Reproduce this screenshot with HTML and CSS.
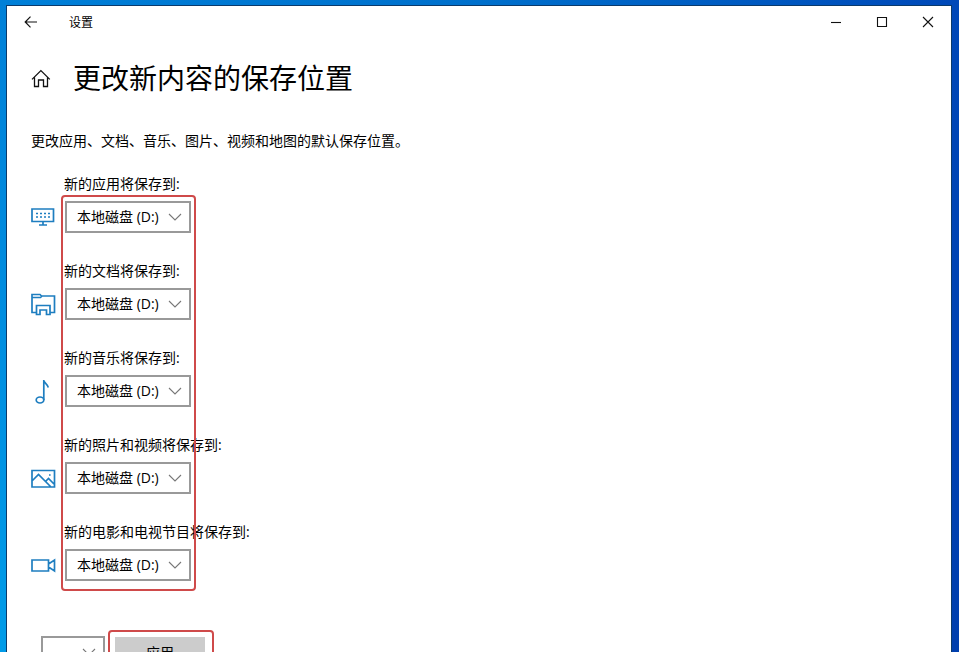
FILE: index.html
```
<!DOCTYPE html>
<html lang="zh-CN">
  <head>
    <meta charset="UTF-8" />
    <meta name="viewport" content="width=device-width, initial-scale=1.0" />
    <title>设置</title>
    <link rel="stylesheet" href="styles.css">
  </head>
  <body>
    <div class="window">
      <header class="titlebar">
        <svg class="back" width="14" height="12" viewBox="0 0 14 12"><path d="M6.5 .7L1.2 6l5.3 5.3M1.2 6H13" /></svg>
        <span class="app-name">设置</span>
        <div class="controls">
          <svg width="12" height="12" viewBox="0 0 12 12"><path d="M1 6.5h10" /></svg>
          <svg width="12" height="12" viewBox="0 0 12 12"><path d="M1.5 1.5h9v9h-9z" /></svg>
          <svg width="12" height="12" viewBox="0 0 12 12"><path d="M1 1l10 10M11 1L1 11" /></svg>
        </div>
      </header>

      <main>
        <div class="heading">
          <svg class="home" width="20" height="20" viewBox="0 0 20 20"><path d="M1 10.4L9.9 1.6l8.9 8.8M3.500 8.500v9h4v-6.500h5v6.500h4v-9" /></svg>
          <h1>更改新内容的保存位置</h1>
        </div>
        <p class="intro">更改应用、文档、音乐、图片、视频和地图的默认保存位置。</p>

        <div class="locations">
          <div class="row">
            <svg class="icon" width="26" height="26" viewBox="0 0 26 26">
              <path d="M1 5h21.500v12.500H1zM12 17.500v3.500M8 21h8" />
              <path class="keys" d="M5 9.500h14M5 13h14" />
            </svg>
            <div class="field">
              <label>新的应用将保存到:</label>
              <div class="select"><span>本地磁盘 (D:)</span><svg class="arrow" width="14" height="8" viewBox="0 0 14 8"><path d="M1 1l6 6 6-6" /></svg></div>
            </div>
          </div>
          <div class="row">
            <svg class="icon" width="26" height="26" viewBox="0 0 26 26">
              <path d="M5.500 21.500H1V3.500h8l1.500 1.500H23.500v16.500H19M1 6.500h8.500l1.500-1.500" />
              <path d="M5.500 23.500V14.500h13.500v9h-3.500v-4.500H9v4.500z" />
            </svg>
            <div class="field">
              <label>新的文档将保存到:</label>
              <div class="select"><span>本地磁盘 (D:)</span><svg class="arrow" width="14" height="8" viewBox="0 0 14 8"><path d="M1 1l6 6 6-6" /></svg></div>
            </div>
          </div>
          <div class="row">
            <svg class="icon" width="26" height="26" viewBox="0 0 26 26">
              <ellipse cx="9" cy="22" rx="3.800" ry="3" />
              <path d="M12.800 22V2c.5 3.500 3.500 3.500 4.500 7.500" />
            </svg>
            <div class="field">
              <label>新的音乐将保存到:</label>
              <div class="select"><span>本地磁盘 (D:)</span><svg class="arrow" width="14" height="8" viewBox="0 0 14 8"><path d="M1 1l6 6 6-6" /></svg></div>
            </div>
          </div>
          <div class="row">
            <svg class="icon" width="26" height="26" viewBox="0 0 26 26">
              <path d="M1 5.500h22.500v16.500H1zM1 16l6.500-6.500L20 22M14.500 16.500l3-3 6 6" />
              <path d="M18 10h1.600" />
            </svg>
            <div class="field">
              <label>新的照片和视频将保存到:</label>
              <div class="select"><span>本地磁盘 (D:)</span><svg class="arrow" width="14" height="8" viewBox="0 0 14 8"><path d="M1 1l6 6 6-6" /></svg></div>
            </div>
          </div>
          <div class="row">
            <svg class="icon" width="26" height="26" viewBox="0 0 26 26">
              <path d="M1 8h16.500v11H1zM17.500 12l6-4v11l-6-4" />
            </svg>
            <div class="field">
              <label>新的电影和电视节目将保存到:</label>
              <div class="select"><span>本地磁盘 (D:)</span><svg class="arrow" width="14" height="8" viewBox="0 0 14 8"><path d="M1 1l6 6 6-6" /></svg></div>
            </div>
          </div>
          <div class="mark"></div>
        </div>

        <div class="actions">
          <div class="select small"><svg class="arrow" width="14" height="8" viewBox="0 0 14 8"><path d="M1 1l6 6 6-6" /></svg></div>
          <div class="apply-mark"><button class="apply">应用</button></div>
        </div>
      </main>
    </div>
  </body>
</html>
```
FILE: styles.css
```
* {
  margin: 0;
  box-sizing: border-box;
}

body {
  height: 652px;
  padding: 5px 7px 0 6px;
  overflow: hidden;
  font-family: "Open Sans", "Noto Sans CJK SC", sans-serif;
  font-size: 14px;
  color: #000;
  background:
    linear-gradient(#0080d8, #009be8) 0 0 / 7px 100% no-repeat,
    linear-gradient(#0048b8, #003fae) 100% 0 / 8px 100% no-repeat,
    linear-gradient(90deg, #0080d8, #0070cc 50%, #0048b8);
}

svg {
  display: block;
  flex: none;
  fill: none;
  stroke: #111;
  stroke-width: 1.1;
}

.window {
  height: 647px;
  overflow: hidden;
  border: 1px solid #0b3a6b;
  border-bottom: 0;
  background: #fff;
}

.titlebar {
  display: flex;
  align-items: center;
  height: 32px;
  padding: 0 17px;
}

.back {
  stroke-width: 1.2;
}

.app-name {
  margin-left: 31px;
  font-size: 12px;
}

.controls {
  display: flex;
  gap: 34px;
  margin-left: auto;
}

main {
  padding: 0 24px;
}

.heading {
  display: flex;
  align-items: center;
  height: 80px;
}

.home {
  margin-top: 1px;
  stroke-width: 1.3;
}

h1 {
  margin-left: 22px;
  font-size: 28px;
  line-height: 40px;
  font-weight: 400;
}

.intro {
  margin-top: 12px;
  line-height: 22px;
}

.locations {
  position: relative;
  margin-top: 22px;
}

.row {
  display: flex;
  height: 87px;
}

.icon {
  margin: 30px 7px 0 0;
  stroke: #1e7ec0;
  stroke-width: 1.7;
}

.keys {
  stroke-dasharray: 2 2;
}

label {
  display: block;
  line-height: 20px;
  white-space: nowrap;
}

.select {
  display: flex;
  align-items: center;
  justify-content: space-between;
  width: 126px;
  height: 32px;
  margin: 7px 0 0 1px;
  padding: 0 7px 0 10px;
  border: 2px solid #999;
  white-space: nowrap;
}

.select span {
  padding-bottom: 2px;
}

.arrow {
  stroke: #777;
}

/* red highlight around all the dropdowns */
.mark {
  position: absolute;
  top: 21px;
  left: 30px;
  width: 135px;
  height: 396px;
  border: 2px solid #cf4a4a;
  border-radius: 4px;
}

.actions {
  display: flex;
  margin: 21px 0 0 10px;
}

.select.small {
  width: 64px;
  margin: 6px 3px 0 0;
  justify-content: flex-end;
}

.apply-mark {
  width: 106px;
  height: 44px;
  padding: 5px;
  border: 2px solid #cf4a4a;
  border-radius: 4px;
}

.apply {
  display: block;
  width: 90px;
  height: 32px;
  padding: 0 0 2px;
  border: 0;
  background: #ccc;
  font: inherit;
  color: #000;
}
```
